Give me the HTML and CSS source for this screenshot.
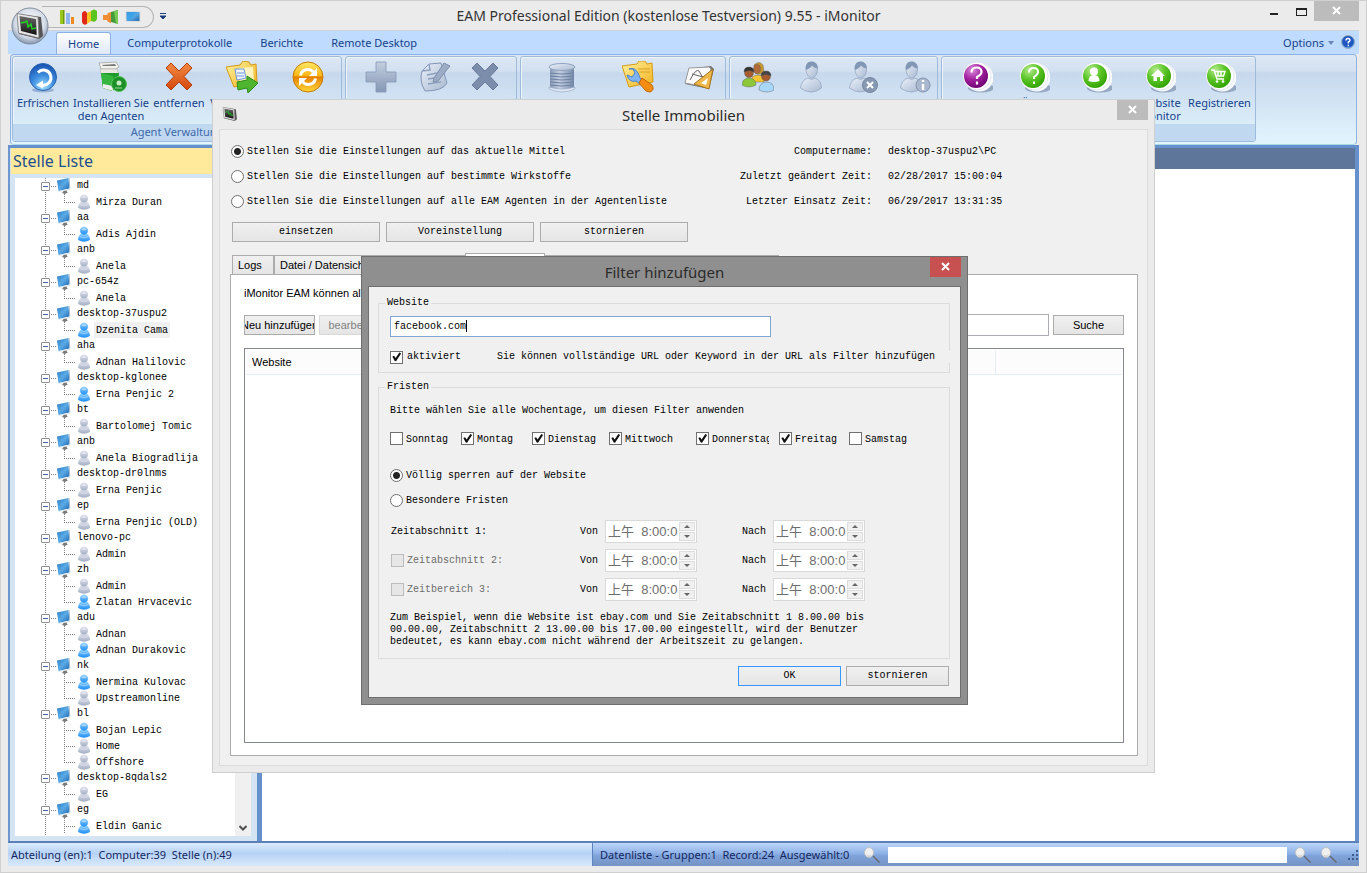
FILE: index.html
```html
<!DOCTYPE html>
<html lang="de">
<head>
<meta charset="utf-8">
<title>EAM Professional Edition - iMonitor</title>
<link rel="stylesheet" href="styles.css">
</head>
<body>
<svg class="defs" width="0" height="0" aria-hidden="true">
  <defs>
    <linearGradient id="gScreen" x1="0" y1="0" x2="1" y2="1"><stop offset="0" stop-color="#2a7cc4"/><stop offset=".5" stop-color="#5aaae4"/><stop offset="1" stop-color="#1d66b0"/></linearGradient>
    <linearGradient id="gBlueMan" x1="0" y1="0" x2="0" y2="1"><stop offset="0" stop-color="#8fd0ff"/><stop offset="1" stop-color="#1c8df5"/></linearGradient>
    <linearGradient id="gGrayMan" x1="0" y1="0" x2="0" y2="1"><stop offset="0" stop-color="#dfe2ec"/><stop offset="1" stop-color="#a4adc4"/></linearGradient>
    <linearGradient id="gSteel" x1="0" y1="0" x2="0" y2="1"><stop offset="0" stop-color="#c3cfe0"/><stop offset="1" stop-color="#8597b3"/></linearGradient>
    <linearGradient id="gPale" x1="0" y1="0" x2="1" y2="1"><stop offset="0" stop-color="#e9f0f9"/><stop offset="1" stop-color="#a9b9d1"/></linearGradient>
    <linearGradient id="gCan" x1="0" y1="0" x2="1" y2="0"><stop offset="0" stop-color="#8799b6"/><stop offset=".4" stop-color="#c4d0e2"/><stop offset="1" stop-color="#7588a8"/></linearGradient>
    <linearGradient id="gFolder" x1="0" y1="0" x2="1" y2="1"><stop offset="0" stop-color="#fff3a0"/><stop offset="1" stop-color="#f3b01c"/></linearGradient>
    <linearGradient id="gOrange" x1="0" y1="0" x2="0" y2="1"><stop offset="0" stop-color="#f58a45"/><stop offset="1" stop-color="#d2480c"/></linearGradient>
    <linearGradient id="gDark" x1="0" y1="0" x2="0" y2="1"><stop offset="0" stop-color="#6a6a6a"/><stop offset="1" stop-color="#111"/></linearGradient>
    <radialGradient id="gBlueBall" cx=".5" cy=".85" r=".8"><stop offset="0" stop-color="#9fe0ff"/><stop offset=".5" stop-color="#3f8fe0"/><stop offset="1" stop-color="#1b57b4"/></radialGradient>
    <radialGradient id="gGreenBall" cx=".35" cy=".25" r=".8"><stop offset="0" stop-color="#b4ea8c"/><stop offset=".5" stop-color="#5cc528"/><stop offset="1" stop-color="#2fa000"/></radialGradient>
    <radialGradient id="gPurpleBall" cx=".35" cy=".25" r=".8"><stop offset="0" stop-color="#d890dc"/><stop offset=".5" stop-color="#a3209f"/><stop offset="1" stop-color="#6d0070"/></radialGradient>
    <linearGradient id="gYellowBall" x1="0" y1="0" x2="0" y2="1"><stop offset="0" stop-color="#ffe96a"/><stop offset=".45" stop-color="#fbb615"/><stop offset=".5" stop-color="#e58100"/><stop offset="1" stop-color="#ffd83c"/></linearGradient>
    <radialGradient id="gOrb" cx=".5" cy=".4" r=".6"><stop offset="0" stop-color="#ffffff"/><stop offset=".7" stop-color="#d4dce8"/><stop offset="1" stop-color="#8193ac"/></radialGradient>
    <symbol id="pc" viewBox="0 0 14 16"><path d="M0 2.500 11.500 0l1 10.500L1.500 13z" fill="url(#gScreen)"/><path d="M11.500 0l1 .3.800 10-.8.200z" fill="#9fb4c8"/><path d="M1.500 13l11.500-2.500v1.200L2 14z" fill="#e0e6ec"/><path d="M6 13.200l3.500-.8.500 1.400 1 .5L8 16l-3.500-1.200 1.700-.6z" fill="#777"/></symbol>
    <symbol id="man" viewBox="0 0 12 16"><path d="M1 10q1-2.500 3-2.500h4q2 0 3 2.500 1 1.500 1 4-6 3.500-12 0Q0 11.500 1 10z"/><path d="M1.500 10.500q4.500 2.500 9 0" stroke="#fff" stroke-opacity=".35" fill="none"/><circle cx="6" cy="4.800" r="4.200" stroke="#fff" stroke-opacity=".6" stroke-width=".6"/><path d="M3 3.500q3-3 6 0-3 1.500-6 0z" fill="#fff" fill-opacity=".4"/></symbol>
    <symbol id="bigman" viewBox="0 0 32 34"><path d="M15 2c5-2 9 1 8.500 7-.3 4-2 7-5 8-4 0-6-4-6.500-8-.4-4 1-6 3-7z" fill="url(#gPale)" stroke="#8fa1bd" stroke-width=".7"/><path d="M12 9c-1-6 2-9 6-8.500 4 .5 6 3 5.600 7C21 7 19 6 18 4.500 17 7 14 8 12 9z" fill="#8296b5"/><path d="M14 17q4 3 7 0 6 2 6.500 10-10 8-21 0 1-8 7.500-10z" fill="url(#gPale)" stroke="#8fa1bd" stroke-width=".7"/></symbol>
    <symbol id="ball" viewBox="0 0 34 34"><ellipse cx="20" cy="27" rx="13" ry="4.500" fill="#8295b0" opacity=".75"/><circle cx="18.500" cy="16.500" r="14" fill="#f8fafc"/><circle cx="16" cy="15" r="14" fill="#fff" stroke="#d5dde6" stroke-width=".7"/></symbol>
    <symbol id="cross" viewBox="0 0 32 32"><path d="M3 7 8 2l8 8 8-8 5 5-8 8.500 8 8.500-5 5-8-8-8 8-5-5 8-8.500z"/></symbol>
    <symbol id="app" viewBox="0 0 30 30"><path d="M3 3 26 6l2 19-4 3L4 23z" fill="#555"/><path d="M2 2.500 23 6l1 21L3.500 22z" fill="#e8e8e8" stroke="#777" stroke-width=".8"/><path d="M4.500 5 21 8l.7 16L6 20z" fill="url(#gDark)"/><path d="M6 12l4-1 2-1 1 6 3-3 1 5 4-1" fill="none" stroke="#22d322" stroke-width="1.400"/></symbol>
    <symbol id="glass" viewBox="0 0 16 16"><path d="M9 9l6.500 6.500" stroke="#666" stroke-width="1.300"/><ellipse cx="5" cy="5.500" rx="4.500" ry="5" fill="#f0f0f0" stroke="#c0c0c0"/><path d="M2 7q3 3 6 0-1 3-3 3T2 7z" fill="#ccc"/></symbol>
    <symbol id="x" viewBox="0 0 10 10"><path d="M1 1l7 7M8 1 1 8" stroke="#fff" stroke-width="2"/></symbol>
  </defs>
</svg>

<div class="window">
  <header class="titlebar">
    <button class="orb" aria-label="Menü"><svg viewBox="0 0 38 38"><circle cx="19" cy="19" r="18" fill="url(#gOrb)" stroke="#7f8b9c"/><use href="#app" x="4" y="4" width="30" height="30"/></svg></button>
    <div class="quick">
      <button aria-label="Statistik"><svg viewBox="0 0 16 16"><path d="M1 1h4v14H1z" fill="#9ac81c"/><path d="M7 4h4v11H7z" fill="#8db4ee"/><path d="M12 8h3v7h-3z" fill="#ee8a20"/><path d="M4 1h1.500v14H4z" fill="#6d9a0c"/></svg></button>
      <button aria-label="Diagramm"><svg viewBox="0 0 16 16"><path d="M1 4q3-4 5 0v11q-4 2-5-2z" fill="#e02818"/><path d="M6 4l4-2v10l-4 3z" fill="#f7c424"/><path d="M10 2q3-3 6 0v8q-1 4-6 2z" fill="#5cc41c"/></svg></button>
      <button aria-label="Bericht"><svg viewBox="0 0 16 16"><path d="M0 6h4l1-2 3-1v11l-3-1-1-2H0z" fill="#f08c34"/><path d="M8 3l7-2v14l-7-2z" fill="#459a3c"/><path d="M11 2l4-1v14h-2z" fill="#78ca52"/></svg></button>
      <button aria-label="Monitor"><svg viewBox="0 0 16 16"><path d="M1 2.500h14v10H1z" fill="url(#gScreen)" stroke="#ddd"/><path d="M2 3h9l-6 9H2z" fill="#37a4ec" opacity=".7"/></svg></button>
    </div>
    <button class="more" aria-label="Mehr"><svg viewBox="0 0 8 8"><path d="M1 1.500h6M1 4h6L4 7z" stroke="#1f3f7d" fill="#1f3f7d"/></svg></button>
    <h1>EAM Professional Edition (kostenlose Testversion) 9.55 - iMonitor</h1>
    <div class="controls">
      <button class="min" aria-label="Minimieren"></button>
      <button class="max" aria-label="Maximieren"></button>
      <button class="close wide" aria-label="Schließen"><svg><use href="#x"/></svg></button>
    </div>
  </header>

  <nav class="tabs">
    <a class="current" href="#home">Home</a>
    <a href="#log">Computerprotokolle</a>
    <a href="#rep">Berichte</a>
    <a href="#rd">Remote Desktop</a>
    <button class="options">Options <svg viewBox="0 0 6 4"><path d="M0 0h6L3 4z" fill="#6b86b8"/></svg></button>
    <button class="help" aria-label="Hilfe"><svg viewBox="0 0 14 14"><circle cx="7" cy="7" r="6.500" fill="url(#gBlueBall)" stroke="#9ab"/><circle cx="7" cy="7" r="5.500" fill="#1f55c0"/><path d="M5 5.500q0-2 2-2t2 1.800Q9 6.400 7.300 7v1.500M7.300 9.800v1.400" stroke="#fff" stroke-width="1.400" fill="none"/></svg></button>
  </nav>

  <div class="ribbon">
    <section class="group g1">
      <div class="tools">
        <button><svg viewBox="0 0 32 32"><ellipse cx="16" cy="29" rx="11" ry="2.500" fill="#5b82bb" opacity=".5"/><circle cx="16" cy="16" r="13.500" fill="url(#gBlueBall)" stroke="#2c63ae"/><path d="M11 11.500a7.500 7.500 0 1 1 4 12.500" fill="none" stroke="#fff" stroke-width="3"/><path d="M9 24l7-4.500v8z" fill="#fff"/></svg>Erfrischen</button>
        <button><svg viewBox="0 0 32 32"><path d="M4 2l17-1 3 5-3 2H6z" fill="#f2f2ec" stroke="#999" stroke-width=".7"/><path d="M7 4l13-1 1 2H8z" fill="#777"/><path d="M5 8h17l2 5H6z" fill="#e8e8e0" stroke="#aaa" stroke-width=".5"/><path d="M6 12h18l-1 14-6 4-9-3z" fill="#1e9a2c"/><path d="M6 12l12 3v15L8 27z" fill="#35b53d"/><path d="M8 23l10 2v5L8 27z" fill="#eee"/><circle cx="24" cy="23" r="7.500" fill="#1d8f27" stroke="#55c45a"/><circle cx="24" cy="22" r="2.500" fill="#c5eac2"/><path d="M20 27h7" stroke="#9ad99a"/></svg>Installieren Sie den Agenten</button>
        <button><svg viewBox="0 0 32 32"><use href="#cross" fill="url(#gOrange)" stroke="#b63c06" stroke-width="1"/></svg>entfernen</button>
        <button><svg viewBox="0 0 32 32"><path d="M0 6l14-2 3-4 6 1 2 3 5-1 1 18-23 5z" fill="url(#gFolder)" stroke="#d29a1a"/><path d="M13 7l14-1 1 14-14 3z" fill="#fff4c0"/><path d="M9 8h9l2 9-9 2z" fill="#eef5ff" stroke="#6c94d8"/><path d="M11 12h7M11 15h7" stroke="#6c94d8"/><path d="M11 21l10-2v-4l11 7-10 10-1-5-9 2z" fill="#4fb52e" stroke="#2c8c16"/></svg>Verschieben</button>
        <button aria-label="Aktualisieren"><svg viewBox="0 0 32 32"><circle cx="16" cy="16" r="15" fill="url(#gYellowBall)" stroke="#c77b00"/><path d="M8.500 14.500q1-6 7.500-6 3.500 0 5.500 3M23.500 17.500q-1 6-7.500 6-3.500 0-5.500-3" fill="none" stroke="#fff" stroke-width="3"/><path d="M25 7v8h-8zM7 25v-8h8z" fill="#fff"/></svg></button>
      </div>
      <h2>Agent Verwaltung</h2>
    </section>
    <section class="group g2">
      <div class="tools">
        <button aria-label="Hinzufügen"><svg viewBox="0 0 32 32"><path d="M11 1h10v10h10v10H21v10H11V21H1V11h10z" fill="url(#gSteel)" stroke="#8598b6" stroke-width=".8"/></svg></button>
        <button aria-label="Bearbeiten"><svg viewBox="0 0 32 32"><path d="M3 10 10 3l12-1 6 20q-4 8-22 8Q0 20 3 10z" fill="url(#gPale)" stroke="#8295b5"/><path d="M3 10l8-1-1-6M8 14l10-2M9 18l12-2M9 23l13-2" fill="none" stroke="#8fa0bd" stroke-width="1.500"/><path d="M15 17 25 2l6 3-12 15-5 1z" fill="#9dacc5" stroke="#7e90ae"/></svg></button>
        <button aria-label="Löschen"><svg viewBox="0 0 32 32"><use href="#cross" fill="#7b8dab" stroke="#687b9b"/></svg></button>
      </div>
      <h2></h2>
    </section>
    <section class="group g3">
      <div class="tools">
        <button aria-label="Datenbank"><svg viewBox="0 0 32 32"><path d="M4 7h24v20q-12 5-24 0z" fill="url(#gCan)"/><path d="M4 12q12 2 24 0M4 15q12 2 24 0M4 18q12 2 24 0M4 21q12 2 24 0M4 24q12 2 24 0" fill="none" stroke="#6f83a3"/><path d="M3 26q13 4 26 0v2q-13 6-26 0z" fill="#dde6f2" stroke="#93a5c1" stroke-width=".6"/><ellipse cx="16" cy="6" rx="13" ry="3.500" fill="url(#gPale)" stroke="#91a3bf"/></svg></button>
        <button aria-label="Einstellungen"><svg viewBox="0 0 32 32"><path d="M0 5l15-2 2-3h6l2 3 5-1 1 19-24 5z" fill="url(#gFolder)" stroke="#d59b16"/><path d="M16 8h12M17 11h11" stroke="#d9a327"/><path d="M7 8q6-2 9 4l2 5 4 3-3 4-5-4q-7 2-9-6l5 2 3-4-2-4z" fill="#7fb2f0" stroke="#4a83cc"/><path d="M20 17l10 7q3 5-2 7l-4-1-7-8z" fill="#f58d12" stroke="#c46400"/></svg></button>
        <button aria-label="Entwurf"><svg viewBox="0 0 32 32"><path d="M6 8 28 5l3 3-5 20L2 23z" fill="#777"/><path d="M6 7l20-1 2 2-5 18-21-4z" fill="#fafafa" stroke="#999"/><path d="M7 19q6-12 9-9l4 7M9 13l11 3" stroke="#666" fill="none"/><path d="M30 8 26 28 11 23z" fill="#efb74a" stroke="#a87518"/><path d="M25 17l-2 7-5-2z" fill="#fff"/></svg></button>
      </div>
      <h2></h2>
    </section>
    <section class="group g4">
      <div class="tools">
        <button aria-label="Gruppen"><svg viewBox="0 0 32 32"><g stroke="#555" stroke-width=".4"><path d="M10 16q6-4 12 0v5H10z" fill="#f5c531"/><path d="M12 4q5-5 9 0l1 7q-5 4-9 1z" fill="#c99a2e"/><ellipse cx="15" cy="8" rx="3.500" ry="4.500" fill="#b06a3a"/><path d="M0 24q0-6 6-7 8 0 8 7-7 4-14 0z" fill="#8cc63a"/><circle cx="7" cy="12" r="4.500" fill="#a65c30"/><path d="M2 11q0-5 5-5t5 5q-5-3-10 0z" fill="#333"/><path d="M17 29q0-7 7-8 8 0 8 8-7 4-15 0z" fill="#a8d7fa"/><circle cx="24" cy="15.500" r="4.500" fill="#a65c30"/><path d="M19 15q0-5 5-5t5 5q-5-3-10 0z" fill="#444"/></g></svg></button>
        <button aria-label="Benutzer"><svg viewBox="0 0 32 32"><use href="#bigman" x="-1" width="34" height="34"/></svg></button>
        <button aria-label="Benutzer entfernen"><svg viewBox="0 0 32 32"><use href="#bigman" x="-5" width="34" height="34"/><circle cx="23" cy="24" r="7.500" fill="#8798b3" stroke="#74869f"/><path d="M20 21l6 6M26 21l-6 6" stroke="#fff" stroke-width="2"/></svg></button>
        <button aria-label="Benutzer Info"><svg viewBox="0 0 32 32"><use href="#bigman" x="-6" width="34" height="34"/><circle cx="24" cy="24" r="7" fill="#a9b8cf" stroke="#8292ac"/><path d="M24 19v2M24 23v6" stroke="#fff" stroke-width="2.400"/></svg></button>
      </div>
      <h2></h2>
    </section>
    <section class="group g5">
      <div class="tools">
        <button aria-label="Hilfe"><svg viewBox="0 0 32 32"><use href="#ball" width="34" height="34"/><circle cx="15" cy="15" r="12" fill="url(#gPurpleBall)"/><path d="M10.500 11.500q0-5 5-5t5 4.500q0 2.500-4.500 5v2M16 20.500v3" fill="none" stroke="#fff" stroke-width="2.200"/></svg></button>
        <button><svg viewBox="0 0 32 32"><use href="#ball" width="34" height="34"/><circle cx="15" cy="15" r="12" fill="url(#gGreenBall)"/><path d="M11 11.500q0-4.500 4.500-4.500T20 11q0 2.500-4 5v2M16 20.500v2.500" fill="none" stroke="#fff" stroke-width="2"/></svg>Über</button>
        <button aria-label="Konto"><svg viewBox="0 0 32 32"><use href="#ball" width="34" height="34"/><circle cx="15" cy="15" r="12" fill="url(#gGreenBall)"/><circle cx="14" cy="10.500" r="4" fill="#fff"/><path d="M8.500 20q0-6 5.500-6t5.500 6q-5.500 2-11 0z" fill="#fff"/></svg></button>
        <button><svg viewBox="0 0 32 32"><use href="#ball" width="34" height="34"/><circle cx="15" cy="15" r="12" fill="url(#gGreenBall)"/><path d="M14 8l7 7h-2v5h-3v-4h-3v4h-3.500v-5H7z" fill="#fff"/></svg>Website Monitor</button>
        <button><svg viewBox="0 0 32 32"><use href="#ball" width="34" height="34"/><circle cx="15" cy="15" r="12" fill="url(#gGreenBall)"/><path d="M7 9h3l3 9h7M10.500 10.500H21L19.500 15H12M14 10.500v4M17 10.500v4" fill="none" stroke="#fff" stroke-width="1.400"/><circle cx="13" cy="20.500" r="1.300" fill="#fff"/><circle cx="19" cy="20.500" r="1.300" fill="#fff"/></svg>Registrieren</button>
      </div>
      <h2></h2>
    </section>
  </div>

  <main class="work">
    <aside class="side">
      <h2>Stelle Liste</h2>
      <div class="treebox">
        <ul class="tree">
          <li><div class="node"><button></button><svg><use href="#pc"/></svg>md</div>
            <ul><li><svg><use href="#man"/></svg><span>Mirza Duran</span></li></ul></li>
          <li><div class="node"><button></button><svg><use href="#pc"/></svg>aa</div>
            <ul><li class="on"><svg><use href="#man"/></svg><span>Adis Ajdin</span></li></ul></li>
          <li><div class="node"><button></button><svg><use href="#pc"/></svg>anb</div>
            <ul><li><svg><use href="#man"/></svg><span>Anela</span></li></ul></li>
          <li><div class="node"><button></button><svg><use href="#pc"/></svg>pc-654z</div>
            <ul><li><svg><use href="#man"/></svg><span>Anela</span></li></ul></li>
          <li><div class="node"><button></button><svg><use href="#pc"/></svg>desktop-37uspu2</div>
            <ul><li class="on selected"><svg><use href="#man"/></svg><span>Dzenita Cama</span></li></ul></li>
          <li><div class="node"><button></button><svg><use href="#pc"/></svg>aha</div>
            <ul><li><svg><use href="#man"/></svg><span>Adnan Halilovic</span></li></ul></li>
          <li><div class="node"><button></button><svg><use href="#pc"/></svg>desktop-kglonee</div>
            <ul><li class="on"><svg><use href="#man"/></svg><span>Erna Penjic 2</span></li></ul></li>
          <li><div class="node"><button></button><svg><use href="#pc"/></svg>bt</div>
            <ul><li><svg><use href="#man"/></svg><span>Bartolomej Tomic</span></li></ul></li>
          <li><div class="node"><button></button><svg><use href="#pc"/></svg>anb</div>
            <ul><li><svg><use href="#man"/></svg><span>Anela Biogradlija</span></li></ul></li>
          <li><div class="node"><button></button><svg><use href="#pc"/></svg>desktop-dr0lnms</div>
            <ul><li><svg><use href="#man"/></svg><span>Erna Penjic</span></li></ul></li>
          <li><div class="node"><button></button><svg><use href="#pc"/></svg>ep</div>
            <ul><li><svg><use href="#man"/></svg><span>Erna Penjic (OLD)</span></li></ul></li>
          <li><div class="node"><button></button><svg><use href="#pc"/></svg>lenovo-pc</div>
            <ul><li><svg><use href="#man"/></svg><span>Admin</span></li></ul></li>
          <li><div class="node"><button></button><svg><use href="#pc"/></svg>zh</div>
            <ul><li><svg><use href="#man"/></svg><span>Admin</span></li><li class="on"><svg><use href="#man"/></svg><span>Zlatan Hrvacevic</span></li></ul></li>
          <li><div class="node"><button></button><svg><use href="#pc"/></svg>adu</div>
            <ul><li><svg><use href="#man"/></svg><span>Adnan</span></li><li class="on"><svg><use href="#man"/></svg><span>Adnan Durakovic</span></li></ul></li>
          <li><div class="node"><button></button><svg><use href="#pc"/></svg>nk</div>
            <ul><li class="on"><svg><use href="#man"/></svg><span>Nermina Kulovac</span></li><li><svg><use href="#man"/></svg><span>Upstreamonline</span></li></ul></li>
          <li><div class="node"><button></button><svg><use href="#pc"/></svg>bl</div>
            <ul><li class="on"><svg><use href="#man"/></svg><span>Bojan Lepic</span></li><li><svg><use href="#man"/></svg><span>Home</span></li><li><svg><use href="#man"/></svg><span>Offshore</span></li></ul></li>
          <li><div class="node"><button></button><svg><use href="#pc"/></svg>desktop-8qdals2</div>
            <ul><li><svg><use href="#man"/></svg><span>EG</span></li></ul></li>
          <li><div class="node"><button></button><svg><use href="#pc"/></svg>eg</div>
            <ul class="open"><li class="on"><svg><use href="#man"/></svg><span>Eldin Ganic</span></li></ul></li>
        </ul>
        <div class="scroll"><button aria-label="Nach unten"><svg viewBox="0 0 8 6"><path d="M.5 1 4 4.500 7.500 1" fill="none" stroke="#505050" stroke-width="2"/></svg></button></div>
      </div>
    </aside>
    <section class="content"><div class="strip"></div></section>
  </main>

  <footer class="status">
    <div class="left">Abteilung (en):1&nbsp; Computer:39&nbsp; Stelle (n):49</div>
    <div class="right">
      <label for="find">Datenliste - Gruppen:1&nbsp; Record:24&nbsp; Ausgewählt:0</label>
      <svg class="lens first"><use href="#glass"/></svg>
      <input id="find" type="text">
      <svg class="lens"><use href="#glass"/></svg>
      <svg class="lens"><use href="#glass"/></svg>
      <svg class="grip" viewBox="0 0 12 12"><path d="M9 1h2v2H9zM5 5h2v2H5zM9 5h2v2H9zM1 9h2v2H1zM5 9h2v2H5zM9 9h2v2H9z" fill="#3f5c8c"/></svg>
    </div>
  </footer>

  <section class="dialog">
    <header class="bar">
      <svg class="mini"><use href="#app"/></svg>
      <h2>Stelle Immobilien</h2>
      <button class="close" aria-label="Schließen"><svg><use href="#x"/></svg></button>
    </header>
    <div class="body">
      <div class="top">
        <div class="choices">
          <label><input type="radio" name="scope" checked>Stellen Sie die Einstellungen auf das aktuelle Mittel</label>
          <label><input type="radio" name="scope">Stellen Sie die Einstellungen auf bestimmte Wirkstoffe</label>
          <label><input type="radio" name="scope">Stellen Sie die Einstellungen auf alle EAM Agenten in der Agentenliste</label>
        </div>
        <dl>
          <dt>Computername:</dt><dd>desktop-37uspu2\PC</dd>
          <dt>Zuletzt geändert Zeit:</dt><dd>02/28/2017 15:00:04</dd>
          <dt>Letzter Einsatz Zeit:</dt><dd>06/29/2017 13:31:35</dd>
        </dl>
      </div>
      <div class="actions">
        <button class="btn">einsetzen</button><button class="btn">Voreinstellung</button><button class="btn">stornieren</button>
      </div>
      <div class="pagetabs">
        <button>Logs</button><button class="t2">Datei / Datensicherung</button><button class="active" aria-label="Webseiten"></button><button class="t4" aria-label="Programme"></button>
      </div>
      <div class="pane">
        <p>iMonitor EAM können alle</p>
        <div class="filter">
          <button class="btn"><span>Neu hinzufügen</span></button>
          <button class="btn" disabled><span>bearbeiten</span></button>
          <input type="text" aria-label="Suchbegriff">
          <button class="btn"><span>Suche</span></button>
        </div>
        <div class="listbox"><table><thead><tr><th>Website</th><th class="last"></th></tr></thead></table></div>
      </div>
    </div>
  </section>

  <section class="popup">
    <header class="bar">
      <h2>Filter hinzufügen</h2>
      <button class="close red" aria-label="Schließen"><svg><use href="#x"/></svg></button>
    </header>
    <form class="form">
      <fieldset>
        <legend>Website</legend>
        <div class="url"><input type="text" value="facebook.com" aria-label="Website"><i class="caret"></i></div>
        <div class="enable"><label><input type="checkbox" checked>aktiviert</label><span>Sie können vollständige URL oder Keyword in der URL als Filter hinzufügen</span></div>
      </fieldset>
      <fieldset class="limits">
        <legend>Fristen</legend>
        <p class="hint">Bitte wählen Sie alle Wochentage, um diesen Filter anwenden</p>
        <div class="days">
          <label><input type="checkbox"><span>Sonntag</span></label>
          <label><input type="checkbox" checked><span>Montag</span></label>
          <label><input type="checkbox" checked><span>Dienstag</span></label>
          <label><input type="checkbox" checked><span>Mittwoch</span></label>
          <label><input type="checkbox" checked><span class="cut">Donnerstag</span></label>
          <label><input type="checkbox" checked><span>Freitag</span></label>
          <label><input type="checkbox"><span>Samstag</span></label>
        </div>
        <div class="modes">
          <label><input type="radio" name="mode" checked>Völlig sperren auf der Website</label>
          <label><input type="radio" name="mode">Besondere Fristen</label>
        </div>
        <div class="times">
          <span>Zeitabschnitt 1:</span>
          <label for="a1">Von</label><div class="time"><input id="a1" value="上午&nbsp; 8:00:0" disabled><div class="spin"><button disabled aria-label="mehr"></button><button disabled aria-label="weniger"></button></div></div>
          <label for="b1">Nach</label><div class="time"><input id="b1" value="上午&nbsp; 8:00:0" disabled><div class="spin"><button disabled aria-label="mehr"></button><button disabled aria-label="weniger"></button></div></div>
          <label class="off"><input type="checkbox" disabled>Zeitabschnitt 2:</label>
          <label for="a2">Von</label><div class="time"><input id="a2" value="上午&nbsp; 8:00:0" disabled><div class="spin"><button disabled aria-label="mehr"></button><button disabled aria-label="weniger"></button></div></div>
          <label for="b2">Nach</label><div class="time"><input id="b2" value="上午&nbsp; 8:00:0" disabled><div class="spin"><button disabled aria-label="mehr"></button><button disabled aria-label="weniger"></button></div></div>
          <label class="off"><input type="checkbox" disabled>Zeitbereich 3:</label>
          <label for="a3">Von</label><div class="time"><input id="a3" value="上午&nbsp; 8:00:0" disabled><div class="spin"><button disabled aria-label="mehr"></button><button disabled aria-label="weniger"></button></div></div>
          <label for="b3">Nach</label><div class="time"><input id="b3" value="上午&nbsp; 8:00:0" disabled><div class="spin"><button disabled aria-label="mehr"></button><button disabled aria-label="weniger"></button></div></div>
        </div>
        <p class="note">Zum Beispiel, wenn die Website ist ebay.com und Sie Zeitabschnitt 1 8.00.00 bis<br>00.00.00, Zeitabschnitt 2 13.00.00 bis 17.00.00 eingestellt, wird der Benutzer<br>bedeutet, es kann ebay.com nicht während der Arbeitszeit zu gelangen.</p>
      </fieldset>
      <div class="buttons"><button class="btn primary" type="button">OK</button><button class="btn" type="button">stornieren</button></div>
    </form>
  </section>
</div>
</body>
</html>
```
FILE: styles.css
```css
* { box-sizing: border-box; }
:root {
  --ui: "Noto Sans", "Open Sans", sans-serif;
  --mono: "Liberation Mono", "Noto Sans CJK SC", monospace;
  --sans: "Liberation Sans", "Noto Sans CJK SC", sans-serif;
}
html, body { margin: 0; height: 100%; }
body { font: 11px/14px var(--ui); color: #000; overflow: hidden; }
h1, h2, p, dl, dd, ul { margin: 0; padding: 0; font-weight: normal; }
ul { list-style: none; }
button, input { font: inherit; color: inherit; margin: 0; padding: 0; }
button { border: 0; background: none; white-space: nowrap; }
svg { display: block; flex: none; }
.defs { position: absolute; }

.window {
  position: relative; display: flex; flex-direction: column; height: 100%;
  padding: 0 7px 6px; background: #ebebeb; border: 1px solid #cfcfcf;
}

/* title bar */
.titlebar { position: relative; display: flex; height: 29px; flex: none; }
.orb { position: absolute; left: 3px; top: 6px; width: 38px; height: 38px; z-index: 2; }
.quick {
  display: flex; align-items: center; gap: 6px; width: 112px; height: 22px;
  margin: 5px 0 0 34px; padding-left: 17px;
  border: 1px solid #b5b5b5; border-left: 0; border-radius: 0 11px 11px 0;
}
.quick svg { width: 16px; height: 16px; }
.more { width: 8px; margin-left: 5px; }
.more svg { width: 8px; height: 8px; }
.titlebar h1 { flex: 1; padding-right: 100px; text-align: center; font-size: 14px; line-height: 29px; color: #333; }
.controls { display: flex; align-items: flex-start; }
.min { width: 8px; height: 2px; margin: 12px 18px 0 0; background: #222; }
.max { width: 11px; height: 8px; margin: 7px 7px 0 0; border: 1px solid #222; border-top-width: 2px; }
.close { display: grid; place-items: center; width: 31px; height: 20px; background: #bcbcbc; }
.close.wide { width: 45px; }
.close.red { background: #c75050; }
.close svg { width: 10px; height: 10px; }

/* ribbon tabs */
.tabs {
  display: flex; align-items: flex-end; flex: none; height: 24px; padding: 0 4px 0 48px;
  background: #bfdbff; color: #15428b; border-top: 1px solid #d0d4da;
}
.tabs a { height: 22px; line-height: 22px; margin-right: 28px; color: inherit; text-decoration: none; }
.tabs a.current {
  padding: 0 11px; margin-right: 16px; border: 1px solid #8db2e3; border-bottom: 0;
  border-radius: 3px 3px 0 0; background: linear-gradient(#fdfeff, #dfe9f6); line-height: 22px;
}
.options { display: flex; align-items: center; gap: 4px; height: 23px; margin-left: auto; }
.options svg { width: 6px; height: 4px; }
.help { margin: 0 0 5px 7px; }
.help svg { width: 14px; height: 14px; }

/* ribbon */
.ribbon {
  display: flex; gap: 3px; flex: none; height: 91px; margin: 0 2px; padding: 1px 1px 2px;
  border: 1px solid #8db2e3; border-bottom-color: #a7dbe9; border-radius: 4px;
  background: linear-gradient(#dde8f5 0, #d3e0f0 18%, #c7d8ed 20%, #e2f5fd 100%);
}
.group {
  display: flex; flex-direction: column; border: 1px solid #9ebbdc; border-radius: 3px;
  box-shadow: inset 1px 1px #ecf3fb; overflow: hidden;
}
.group h2 { height: 17px; flex: none; padding: 1px 0; text-align: center; color: #3e6aaa; background: #c1d8f1; font-size: 11px; line-height: 14px; }
.g1 .tools { grid-template-columns: 60px 76px 60px 66px 66px; }
.g2 .tools { grid-template-columns: 70px 38px 62px; }
.g3 .tools { grid-template-columns: 82px 70px 52px; }
.g4 .tools { grid-template-columns: 56px 48px 58px 45px; }
.g5 .tools { grid-template-columns: 70px 44px 80px 48px 71px; }
.tools { display: grid; flex: 1; color: #15428b; }
.tools button { display: flex; flex-direction: column; align-items: center; line-height: 13px; padding-top: 4px; white-space: normal; }
.tools svg { width: 32px; height: 32px; margin-bottom: 3px; }

/* work area */
.work { display: flex; flex: 1; min-height: 0; padding-top: 3px; background: #6690cc; }
.side { display: flex; flex-direction: column; width: 249px; border-left: 2px solid #6f97cf; background: #d5e4f3; }
.side h2 { height: 26px; margin-left: 1px; padding-left: 2px; background: #ffe99b; color: #1d4f91; font-size: 16px; line-height: 26px; }
.treebox { display: flex; flex: 1; min-height: 0; margin: 4px 6px 5px 5px; background: #fff; overflow: hidden; }
.tree {
  flex: 1; font: 10px/18px var(--mono);
  background: repeating-linear-gradient(#808080 0 1px, transparent 1px 2px) 30px 0 / 1px 100% no-repeat;
}
.node { display: flex; align-items: center; height: 16px; padding-left: 26px; }
.node button { width: 9px; height: 9px; border: 1px solid #919191; border-radius: 1px; background: linear-gradient(#4b63a7, #4b63a7) 1px 3px / 5px 1px no-repeat #fff; }
.node svg { width: 21px; height: 16px; margin-right: 6px; padding-left: 7px; background: repeating-linear-gradient(90deg, #808080 0 1px, transparent 1px 2px) 1px 8px / 6px 1px no-repeat; }
.tree ul li {
  display: flex; align-items: center; height: 16px; padding-left: 63px;
  background:
    repeating-linear-gradient(#808080 0 1px, transparent 1px 2px) 49px 0 / 1px 100% no-repeat,
    repeating-linear-gradient(90deg, #808080 0 1px, transparent 1px 2px) 49px 8px / 12px 1px no-repeat;
}
.tree ul:not(.open) li:last-child { background-size: 1px 8px, 12px 1px; }
.tree ul svg { width: 12px; height: 16px; margin-right: 4px; fill: url(#gGrayMan); }
.tree ul .on svg { fill: url(#gBlueMan); }
.tree ul span { height: 16px; padding: 0 2px; }
.selected span { background: #f0f0f0; }
.scroll { display: flex; align-items: flex-end; width: 16px; background: #f0f0f0; }
.scroll button { width: 16px; height: 16px; }
.scroll svg { width: 8px; height: 6px; margin: 0 auto; }
.content { flex: 1; margin-left: 5px; border-right: 4px solid #6690cc; background: #fff; }
.strip { height: 21px; background: #5f769b; }

/* status bar */
.status { display: flex; flex: none; height: 25px; border-top: 2px solid #5c80b8; color: #15285f; font-size: 11px; }
.left { width: 585px; padding-left: 3px; line-height: 23px; background: linear-gradient(#dcebfc, #b5d2f6 45%, #c0d9f8 60%, #d8e8fb); border-right: 1px solid #5d82bd; }
.right { display: flex; align-items: center; flex: 1; padding: 0 0 0 7px; background: linear-gradient(#bcd5f7, #8fb3e8 45%, #7fa3da 55%, #7593c4); }
.right input { flex: 1; height: 16px; margin-right: 8px; border: 0; background: #fff; }
.lens { width: 16px; height: 16px; margin-right: 10px; }
.lens.first { margin: 0 8px 0 15px; }
.grip { width: 12px; height: 12px; }

/* shared form parts */
input[type="radio"], input[type="checkbox"] { appearance: none; flex: none; width: 13px; height: 13px; border: 1px solid #707070; background: #fff; }
input[type="radio"] { border-radius: 50%; }
input[type="radio"]:checked { background: radial-gradient(#222 0 3px, #fff 4px); }
input[type="checkbox"]:checked::after { content: ""; display: block; width: 11px; height: 11px; background: #111; clip-path: polygon(12% 46%, 28% 38%, 42% 60%, 76% 10%, 92% 18%, 46% 88%, 34% 86%); }
input[type="checkbox"]:disabled { border-color: #bcbcbc; background: #e6e6e6; }
.btn { height: 20px; border: 1px solid #acacac; background: linear-gradient(#f0f0f0, #e5e5e5); font: 10px/16px var(--mono); }
.bar { display: flex; height: 30px; flex: none; padding-right: 6px; }
.bar h2 { flex: 1; text-align: center; font-size: 15px; line-height: 30px; color: #2b2b2b; }

/* station dialog */
.dialog {
  position: absolute; left: 211px; right: 211px; top: 98px; bottom: 99px;
  display: flex; flex-direction: column; padding: 0 6px 6px;
  border: 1px solid #cfcfcf; background: #ebebeb;
}
.dialog .bar { height: 29px; padding: 0; }
.dialog .bar h2 { padding-left: 12px; }
.mini { width: 16px; height: 16px; margin: 6px 0 0 3px; }
.body { display: flex; flex-direction: column; flex: 1; min-height: 0; padding: 9px 9px 9px 10px; border: 1px solid #dcdcdc; background: #f0f0f0; font: 10px/16px var(--mono); }
.top { display: flex; gap: 73px; padding-left: 1px; }
.choices label, .modes label { display: flex; align-items: center; gap: 3px; height: 25px; }
dl { display: grid; grid-template-columns: auto auto; grid-auto-rows: 25px; column-gap: 16px; align-items: center; }
dt { text-align: right; }
.actions { display: flex; gap: 6px; margin: 8px 0 0 2px; }
.actions .btn { width: 148px; }
.pagetabs { display: flex; align-items: flex-end; height: 32px; padding-left: 2px; font: 11px/16px var(--sans); }
.pagetabs button { height: 19px; width: 42px; padding-left: 5px; text-align: left; border: 1px solid #acacac; border-bottom: 0; background: linear-gradient(#f0f0f0, #e5e5e5); overflow: hidden; }
.pagetabs .t2 { width: 191px; }
.pagetabs .active { width: 80px; height: 21px; background: #fff; }
.pagetabs .t4 { width: 234px; }
.pane { display: flex; flex-direction: column; flex: 1; min-height: 0; padding: 10px 13px 12px; border: 1px solid #acacac; background: #fff; font: 11px/16px var(--sans); }
.filter { display: flex; align-items: center; gap: 4px; height: 22px; margin: 13px 0 12px; }
.filter .btn { display: flex; justify-content: center; width: 71px; overflow: hidden; font: 11px/18px var(--sans); }
.filter .btn:disabled { color: #838383; border-color: #d9d9d9; }
.filter input { flex: 1; height: 22px; border: 1px solid #abadb3; background: #fff; }
.listbox { flex: 1; border: 1px solid #828790; padding: 1px; }
.listbox table { width: 100%; border-collapse: collapse; }
th { height: 24px; padding: 0 6px; text-align: left; font-weight: normal; background: #fcfcfc; border-bottom: 1px solid #e4edf5; }
th.last { width: 127px; border-left: 1px solid #e4edf5; }

/* filter dialog */
.popup { position: absolute; left: 360px; top: 255px; width: 607px; padding: 0 6px 6px; border: 1px solid #6e6e6e; background: #8f8f8f; }
.popup .bar { height: 29px; padding: 0; }
.popup .bar h2 { padding-left: 31px; }
.form { padding: 10px 10px 11px 9px; border: 1px solid #6e6e6e; background: #f0f0f0; font: 10px/12px var(--mono); }
fieldset { min-width: 0; margin: 0; padding: 7px 10px 8px 11px; border: 1px solid #dcdcdc; }
legend { padding: 0 2px; margin-left: -5px; line-height: 12px; }
.url { position: relative; width: 381px; }
.url input { display: block; width: 100%; height: 21px; padding: 0 3px; border: 1px solid #7ea6d2; background: #fff; }
.caret { position: absolute; left: 76px; top: 4px; width: 1px; height: 12px; background: #000; }
.enable { display: flex; align-items: center; height: 14px; margin-top: 13px; }
.enable label { display: flex; align-items: center; gap: 4px; width: 107px; }
.enable span { flex: 1; margin-right: -11px; background: #f0f0f0; }
.limits { margin-top: 8px; padding-bottom: 10px; }
.hint { padding: 5px 0 15px; }
.days { display: grid; grid-template-columns: 71px 71px 77px 87px 83px 70px auto; height: 26px; }
.days label { display: flex; align-items: flex-start; gap: 3px; height: 14px; line-height: 15px; }
.cut { width: 57px; overflow: hidden; }
.modes { padding-top: 5px; }
.times { display: grid; grid-template-columns: 190px 25px 137px 31px 92px; grid-auto-rows: 29px; align-items: center; margin-top: 4px; }
.times > span, .times > .off { padding-left: 1px; }
.off { display: flex; align-items: center; gap: 3px; color: #6d6d6d; }
.time { display: flex; width: 92px; height: 23px; padding: 1px; border: 1px solid #d9d9d9; background: #fff; }
.time input { flex: 1; min-width: 0; padding-left: 1px; border: 0; background: #fff; color: #6d6d6d; font: 13px/19px var(--sans); }
.spin { display: grid; width: 16px; gap: 1px; }
.spin button { display: grid; place-items: center; border: 1px solid #dcdcdc; background: #f0f0f0; }
.spin button::after { content: ""; border: 3px solid transparent; border-top: 0; border-bottom-color: #666; }
.spin button:last-child::after { border-top: 3px solid #666; border-bottom: 0; }
.note { margin-top: 8px; }
.buttons { display: flex; justify-content: flex-end; gap: 5px; margin: 7px 1px 0 0; }
.buttons .btn { width: 103px; }
.primary { border-color: #3399ff; }
```
